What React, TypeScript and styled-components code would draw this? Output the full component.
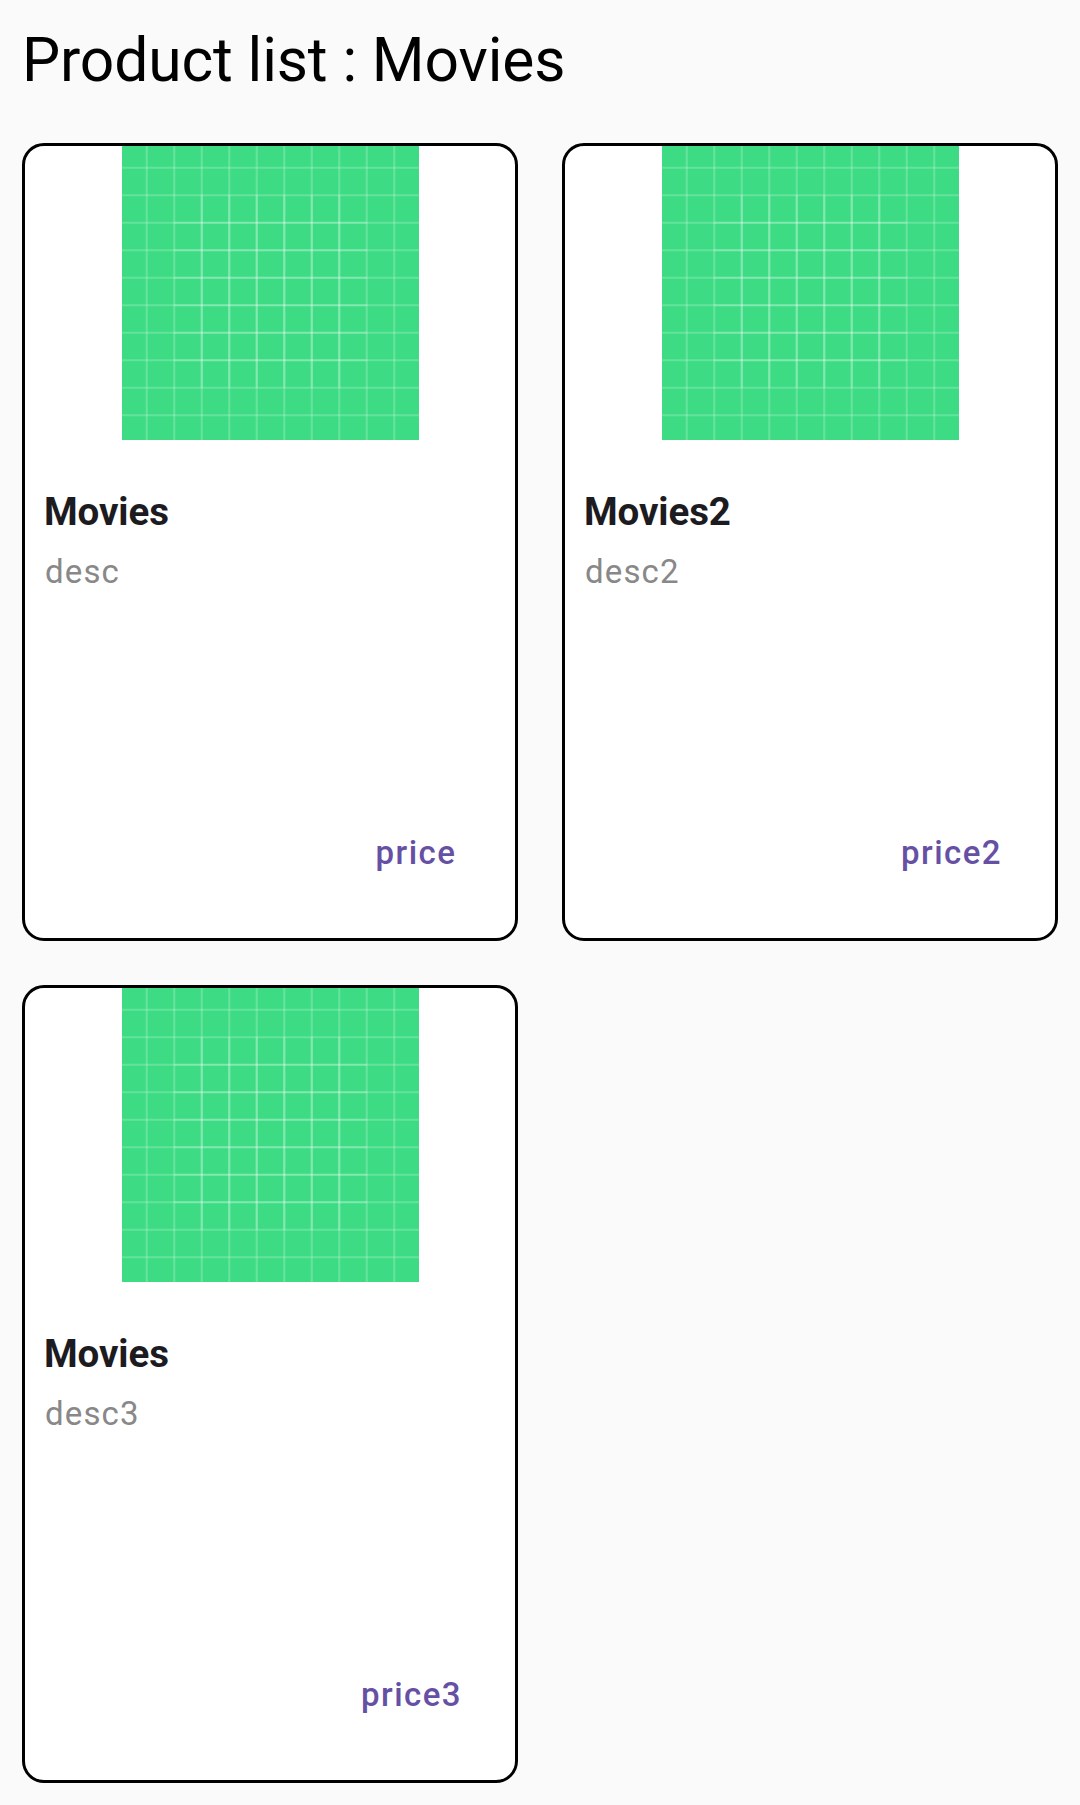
import React from 'react';
import styled, { createGlobalStyle } from 'styled-components';

const GlobalStyle = createGlobalStyle`
  body {
    margin: 0;
    background: #fafafa;
    font-family: Roboto, sans-serif;
  }
`;

const Screen = styled.main`
  box-sizing: border-box;
  width: 1080px;
  min-height: 1805px;
  padding: 22px;
  background: #fafafa;
`;

const Heading = styled.h1`
  margin: 0 0 44px;
  height: 77px;
  font-size: 60.5px;
  line-height: 77px;
  font-weight: 400;
  letter-spacing: -0.12px;
  color: #000;
  white-space: nowrap;
`;

const Grid = styled.div`
  display: grid;
  grid-template-columns: repeat(2, 496px);
  grid-auto-rows: 798px;
  gap: 44px;
`;

const Card = styled.article`
  box-sizing: border-box;
  display: flex;
  flex-direction: column;
  border: 3px solid #000;
  border-radius: 22px;
  background: #fff;
  overflow: hidden;
`;

const Artwork = styled.svg`
  display: block;
  align-self: center;
  width: 297px;
  height: 294px;
  margin-left: 1px;
`;

const Details = styled.div`
  display: flex;
  flex-direction: column;
  padding: 44px 19px 0;
`;

const Name = styled.h2`
  margin: 0;
  font-size: 38.5px;
  line-height: 55px;
  font-weight: 700;
  letter-spacing: -0.1px;
  color: #1c1b1f;
`;

const Description = styled.p`
  margin: 5px 0 0 1px;
  font-size: 33px;
  line-height: 55px;
  letter-spacing: 1.15px;
  color: #888;
`;

const PriceButton = styled.button`
  box-sizing: border-box;
  align-self: flex-end;
  min-width: 160px;
  height: 110px;
  margin: auto 19px 31px 0;
  padding: 0 34px;
  border: 0;
  background: none;
  font-family: inherit;
  font-size: 33px;
  font-weight: 500;
  letter-spacing: 1.45px;
  color: #6650a4;
`;

const lines = [9, 19, 29, 39, 49, 59, 69, 79, 89, 99];
const innerLines = [29, 39, 49, 59, 69, 79];

function GridArtwork() {
  return (
    <Artwork viewBox="0 1.0909 108 106.9091" preserveAspectRatio="none" aria-hidden="true">
      <rect width="108" height="108" fill="#3ddc84" />
      <g stroke="#fff" strokeOpacity="0.2" strokeWidth="0.8">
        {lines.map((p) => <path key={`v${p}`} d={`M${p},0V108`} />)}
        {lines.map((p) => <path key={`h${p}`} d={`M0,${p}H108`} />)}
        {innerLines.map((p) => <path key={`ih${p}`} d={`M19,${p}H89`} />)}
        {innerLines.map((p) => <path key={`iv${p}`} d={`M${p},19V89`} />)}
      </g>
    </Artwork>
  );
}

const products = [
  { name: 'Movies', description: 'desc', price: 'price' },
  { name: 'Movies2', description: 'desc2', price: 'price2' },
  { name: 'Movies', description: 'desc3', price: 'price3' },
];

export default function App() {
  return (
    <>
      <GlobalStyle />
      <Screen>
        <Heading>Product list : Movies</Heading>
        <Grid>
          {products.map((product) => (
            <Card key={product.description}>
              <GridArtwork />
              <Details>
                <Name>{product.name}</Name>
                <Description>{product.description}</Description>
              </Details>
              <PriceButton type="button">{product.price}</PriceButton>
            </Card>
          ))}
        </Grid>
      </Screen>
    </>
  );
}
